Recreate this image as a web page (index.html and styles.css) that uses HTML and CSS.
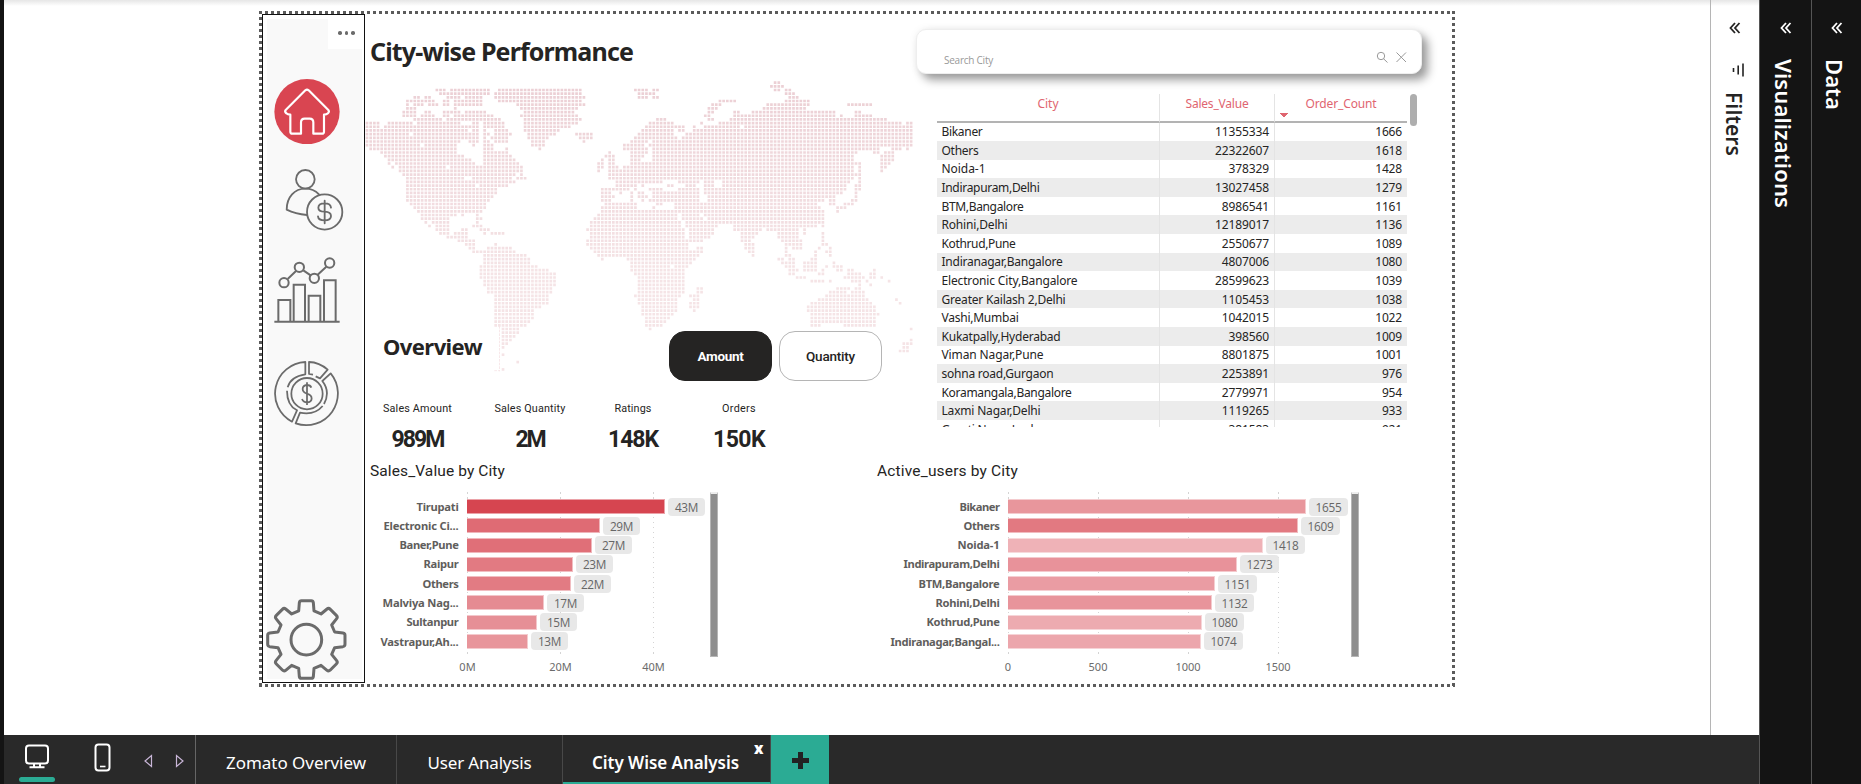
FILE: index.html
```html
<!DOCTYPE html>
<html lang="en">
<head>
<meta charset="utf-8">
<title>City Wise Analysis</title>
<link rel="stylesheet" href="styles.css">
</head>
<body>
<div class="app">
  <div class="workspace">
    <div class="stage">
    <main class="canvas">
      <div class="report">
        <nav class="sidebar">
          <div class="more"><i></i><i></i><i></i></div>
          <svg class="ico home" viewBox="72 236 198 196"><circle cx="171" cy="334" r="98" fill="#d94551"/><path d="M166 270Q171 266 176 270L235 329Q239 334 234 339Q230 343 222 343V394Q222 400 216 400H190V366Q190 355 179 355H164Q153 355 153 366V400H127Q121 400 121 394V343Q113 343 109 339Q103 334 107 329Z" fill="none" stroke="#fff" stroke-width="6.5" stroke-linejoin="round"/></svg>
          <svg class="ico user" viewBox="105 505 176 190"><g fill="none" stroke="#6b6b6b" stroke-width="5.500" stroke-linecap="round" stroke-linejoin="round"><circle cx="166" cy="539" r="28"/><path d="M171 646Q136 643 110 630C110 592 134 567 166 567Q190 567 207 584"/><circle cx="224" cy="637" r="53"/><path d="M224 603V671M243 624Q242 611 224 611Q205 611 205 624Q205 636 224 636Q243 637 243 649Q243 662 224 662Q205 662 204 650"/></g></svg>
          <svg class="ico trend" viewBox="72 770 198 202"><g fill="none" stroke="#6b6b6b" stroke-width="6"><path d="M73 964.500H269M85 964V899H121V964M131 964V853H165V964M176 964V886H211V964M222 964V840H257V964M113 836L138 812M160 810L182 825M203 823L229 799"/><circle cx="102" cy="847" r="14"/><circle cx="148" cy="801" r="14"/><circle cx="193" cy="834" r="14"/><circle cx="239" cy="788" r="14"/></g></svg>
          <svg class="ico donut" viewBox="72 32 198 198"><g fill="none" stroke="#6b6b6b" stroke-width="5.300" stroke-linejoin="round"><circle cx="171" cy="130" r="47"/><path d="M113 111Q122 78 166 72V35A95 95 0 0 0 126 214L141 180Q111 165 111 121"/><path d="M189 73L177 71V35Q208 36 233 58L210 84L197 78"/><path d="M222 161Q242 124 217 92L242 69A95 95 0 0 1 137 219L150 187Q193 196 218 167"/><path d="M171 96V164M184 112Q181 104 171 104Q158 105 158 116Q158 126 171 130Q185 134 185 145Q184 156 171 156Q160 156 156 146"/></g></svg>
          <svg class="ico gear" viewBox="50 746 242 244"><g fill="none" stroke="#6b6b6b" stroke-width="9" stroke-linejoin="round"><circle cx="171" cy="868" r="46"/><path d="M156 751H186Q191 751 192 757L194 782L215 791L233 776Q238 772 243 777L261 795Q266 800 262 805L247 824L256 845L281 848Q287 849 287 855V882Q287 888 281 889L256 892L247 912L262 931Q266 936 261 941L243 959Q238 964 233 960L215 945L194 954L192 979Q191 984 186 984H156Q151 984 150 979L148 954L127 945L109 960Q104 964 99 959L81 941Q76 936 80 931L95 912L86 892L61 889Q55 888 55 882V855Q55 849 61 848L86 845L95 824L80 805Q76 800 81 795L99 777Q104 772 109 776L127 791L148 782L150 757Q151 751 156 751Z"/></g></svg>
        </nav>
        <section class="content">
          <div class="upper">
            <section class="left">
              <svg class="map" id="map" viewBox="0 0 1668 930"></svg>
              <h1><span class="fit" data-w="263">City-wise Performance</span></h1>
              <div class="overview">
                <h2><span class="fit" data-w="99">Overview</span></h2>
                <div class="switch"><button class="on"><span class="fit" data-w="46">Amount</span></button><button><span class="fit" data-w="49">Quantity</span></button></div>
              </div>
              <div class="kpis">
                <div class="k1"><span class="fit" data-w="69">Sales Amount</span><b><span class="fit" data-w="52">989M</span></b></div>
                <div class="k2"><span class="fit" data-w="71">Sales Quantity</span><b><span class="fit" data-w="29">2M</span></b></div>
                <div class="k3"><span class="fit" data-w="37">Ratings</span><b><span class="fit" data-w="50">148K</span></b></div>
                <div class="k4"><span class="fit" data-w="34">Orders</span><b><span class="fit" data-w="52">150K</span></b></div>
              </div>
            </section>
            <section class="right">
              <div class="search">
                <span class="fit" data-w="49">Search City</span>
                <svg viewBox="0 0 32 14"><g fill="none" stroke="#999" stroke-width="1"><circle cx="5" cy="5" r="3.700"/><path d="M7.600 7.800L11.500 11.500M20.500 1.500L30 11M30 1.500L20.500 11"/></g></svg>
              </div>
              <div class="tablebox">
                <table>
                  <thead><tr><th><span class="fit" data-w="21">City</span></th><th><span class="fit" data-w="63">Sales_Value</span></th><th class="sort"><span class="fit" data-w="71">Order_Count</span></th></tr></thead>
                  <tbody id="rows"></tbody>
                </table>
                <div class="thumb"></div>
              </div>
            </section>
          </div>
          <div class="lower">
            <section class="chart sales"><h3><span class="fit" data-w="135">Sales_Value by City</span></h3><div class="plot" id="sales"></div></section>
            <section class="chart users"><h3><span class="fit" data-w="141">Active_users by City</span></h3><div class="plot" id="users"></div></section>
          </div>
        </section>
      </div>
    </main>
    <aside class="pane filters">
      <svg class="chev" viewBox="0 0 12 14"><path d="M6 2L1.500 7L6 12M10.500 2L6 7L10.500 12"/></svg>
      <svg class="funnel" viewBox="0 0 12 14"><path d="M11 .500V13.500M6.200 2.500V11.500M1.500 5V9" stroke="#222" stroke-width="1.600"/></svg>
      <span class="fitv" data-w="64">Filters</span>
    </aside>
    </div>
    <footer class="tabs">
      <div class="views">
        <div class="desk"><svg width="26" height="26" viewBox="0 0 26 26"><g fill="none" stroke="#fff" stroke-width="2"><rect x="2" y="1.500" width="22" height="18" rx="3"/><path d="M10 20V23M16 20V23M5.500 23.300H20.500"/></g></svg><i></i></div>
        <svg class="phone" width="18" height="30" viewBox="0 0 18 30"><rect x="1.500" y="1.500" width="14" height="26" rx="3" fill="none" stroke="#fff" stroke-width="2"/><path d="M6 23.500H11.500" stroke="#fff" stroke-width="1.600"/></svg>
        <svg class="tri t1" width="9" height="14" viewBox="0 0 9 14"><path d="M7.500 1.500V12.500L1 7Z" fill="none" stroke="#c9b6d8" stroke-width="1.200"/></svg>
        <svg class="tri" width="9" height="14" viewBox="0 0 9 14"><path d="M1.500 1.500V12.500L8 7Z" fill="none" stroke="#c9b6d8" stroke-width="1.200"/></svg>
      </div>
      <div class="tab one"><span class="fit" data-w="140">Zomato Overview</span></div>
      <div class="tab two"><span class="fit" data-w="104">User Analysis</span></div>
      <div class="tab three"><span class="fit" data-w="147">City Wise Analysis</span><b>x</b></div>
      <div class="add"></div>
    </footer>
  </div>
  <aside class="pane dark vis"><svg class="chev" viewBox="0 0 12 14"><path d="M6 2L1.500 7L6 12M10.500 2L6 7L10.500 12"/></svg><span class="fitv" data-w="149">Visualizations</span></aside>
  <aside class="pane dark data"><svg class="chev" viewBox="0 0 12 14"><path d="M6 2L1.500 7L6 12M10.500 2L6 7L10.500 12"/></svg><span class="fitv" data-w="51">Data</span></aside>
</div>
<script src="script.js"></script>
</body>
</html>
```
FILE: styles.css
```css
* { box-sizing: border-box; }
body { margin: 0; width: 1861px; height: 784px; overflow: hidden; background: #141414; font-family: "Noto Sans", "Open Sans", sans-serif; color: #252423; }
h1, h2, h3 { margin: 0; }
.fit, .fitv { display: inline-block; white-space: nowrap; }
.app { display: flex; height: 784px; padding-left: 4px; }
.workspace { width: 1755px; flex: none; display: flex; flex-direction: column; }
.stage { display: flex; height: 735px; }
.canvas { width: 1706px; flex: none; height: 735px; padding: 11px 0 0 255px; background: linear-gradient(#e6e6e6, #fff 6px); }
.report {
  width: 1196px; height: 676px; padding: 3px; display: flex;
  background:
    repeating-linear-gradient(90deg, #5b5b5b 0 3px, transparent 3px 6px) 0 0 / 100% 3px no-repeat,
    repeating-linear-gradient(90deg, #5b5b5b 0 3px, transparent 3px 6px) 0 100% / 100% 3px no-repeat,
    repeating-linear-gradient(#5b5b5b 0 3px, transparent 3px 6px) 0 0 / 3px 100% no-repeat,
    repeating-linear-gradient(#5b5b5b 0 3px, transparent 3px 6px) 100% 0 / 3px 100% no-repeat,
    #fff;
}
.sidebar { width: 103px; height: 669px; flex: none; border: 1px solid #111; display: flex; flex-direction: column; padding: 3px 1px 0 3px; background: linear-gradient(#f9f9f9, #f9f9f9) 4px 4px / 95px 660px no-repeat #fff; }
.more { align-self: flex-end; width: 35px; height: 31px; flex: none; background: #fff; display: flex; gap: 3px; padding: 13px 0 0 10px; }
.more i { width: 3.500px; height: 3.500px; border-radius: 50%; background: #6b6b6b; }
.ico { flex: none; display: block; }
.home { width: 66px; height: 65.300px; margin: 29.700px 0 0 8px; }
.user { width: 58.700px; height: 63.300px; margin: 24.300px 0 0 19px; }
.trend { width: 66px; height: 67.300px; margin: 25px 0 0 8px; }
.donut { width: 66px; height: 66px; margin: 36.700px 0 0 8px; }
.gear { width: 80.700px; height: 81.300px; margin: 172px 0 0 .2px; }
.content { flex: 1; }
.upper { display: flex; height: 441px; }
.left { width: 550px; position: relative; }
.map { position: absolute; left: -5px; top: 56px; width: 556px; height: 310px; }
.left > *:not(.map) { position: relative; }
h1 { padding: 16px 0 0 5px; font-size: 25px; line-height: 42px; height: 317px; }
.overview { display: flex; height: 51px; }
h2 { width: 304px; padding-left: 18px; font-size: 22px; line-height: 31px; }
.switch { display: flex; gap: 7px; }
.switch button { width: 103px; height: 50px; padding: 0; border-radius: 16px; border: 1px solid #b5b5b5; background: #fff; font: 500 13.500px Roboto, sans-serif; color: #252423; }
.switch .on { background: #252423; border-color: #252423; color: #fff; font-weight: 700; }
.kpis { display: flex; margin-top: 19px; font: 10.800px/16px Roboto, sans-serif; }
.kpis div { display: flex; flex-direction: column; align-items: center; }
.kpis b { font-size: 23px; line-height: 30px; margin-top: 8px; }
.k1 { margin-left: 17px; width: 71px; }
.k2 { margin-left: 41px; width: 72px; }
.k3 { margin-left: 47px; width: 40px; }
.k3 b, .k4 b { width: 52px; text-align: center; }
.k4 { margin-left: 66px; width: 40px; }
.right { flex: 1; }
.search { width: 506px; height: 45px; margin: 15px 0 0 1px; border: 1px solid #eee; border-radius: 10px; background: #fff; box-shadow: 6px 6px 10px rgba(0,0,0,.38), 0 0 8px rgba(0,0,0,.06); display: flex; justify-content: space-between; align-items: flex-start; padding: 21px 13px 0 27px; font: 10px/18px "Open Sans", sans-serif; color: #999; }
.search svg { width: 32px; height: 14px; }
.tablebox { display: flex; width: 482px; height: 333px; margin: 20px 0 0 22px; overflow: hidden; }
table { width: 470px; flex: none; border-collapse: separate; border-spacing: 0; table-layout: fixed; font-size: 12px; height: max-content; }
th { height: 28.500px; padding: 1px 0 0; font-weight: 400; color: #df6570; border-bottom: 2px solid #b3b3b3; line-height: 17px; vertical-align: top; }
th:nth-child(1) { width: 222px; } th:nth-child(2) { width: 115px; }
th + th, td + td { border-left: 1px solid #e4e4e4; }
.sort { background: conic-gradient(from -45deg at 50% 100%, #df6570 90deg, transparent 0) 5px 19px / 8px 4px no-repeat; }
td { height: 18.600px; padding: 1px 5px 0 4.500px; line-height: 16px; white-space: nowrap; }
td + td { text-align: right; }
tbody tr:nth-child(even) { background: #ececec; }
.thumb { width: 7px; height: 32px; margin-left: 3px; border-radius: 4px; background: #aeaeae; }
.lower { display: flex; height: 229px; }
.chart { width: 507px; padding-left: 5px; }
.chart.users { flex: 1; }
h3 { font: 400 15.500px/20px Roboto, sans-serif; height: 37px; padding-top: 6px; }
.plot { display: grid; grid-template-columns: 88.500px 1fr 8px; width: 348px; height: 185px; grid-template-rows: 165px 20px; }
.users .plot { grid-template-columns: 122.500px 1fr 8px; width: 482px; }
.names { padding-top: 4.600px; text-align: right; font: 700 11.200px/19.290px "Noto Sans", sans-serif; color: #5f5e5c; }
.names div { height: 19.290px; }
.area { margin-left: 8.500px; padding-top: 7px; position: relative; }
.area i { position: absolute; top: 0; bottom: 0; width: 1px; background: repeating-linear-gradient(#d4d4d4 0 1.500px, transparent 1.500px 5px); }
.row { height: 19.290px; display: flex; position: relative; }
.bar { height: 15px; border: 1px solid rgba(255,255,255,.5); border-left: 0; flex: none; }
.tag { width: 37px; height: 18px; margin: -1.500px 0 0 3px; border-radius: 4px; background: rgba(231,231,231,.95); color: #666; text-align: center; font: 11.800px/18px "Open Sans", sans-serif; letter-spacing: -.3px; }
.users .tag { width: 39px; }
.row:first-child .tag { margin-left: 1px; }
.users .row:first-child .tag { margin-left: -1px; width: 38px; }
.users .row:first-child .bar { border-right: 0; }
.scroll { background: #8e8e8e; border: 1px solid #b5b5b5; border-top: 2px solid #eee; }
.axis { grid-column: 1 / 4; position: relative; height: 20px; font: 11px/20px "Noto Sans", sans-serif; color: #6b6b6b; }
.axis span { position: absolute; transform: translateX(-50%); }
.tabs { height: 49px; background: #292929; display: flex; color: #fff; font-size: 17px; }
.views { width: 192px; border-right: 1px solid #666; display: flex; align-items: flex-start; }
.desk { width: 36px; margin: 9px 0 0 15px; text-align: center; line-height: 0; }
.desk i { display: block; height: 5px; border-radius: 3px; background: #2bab94; margin-top: 7px; }
.phone { margin: 8px 0 0 39px; }
.tri { margin: 19px 0 0 22px; }
.t1 { margin-left: 32px; }
.tab { border-right: 1px solid #484848; line-height: 56px; text-align: center; }
.one { width: 201px; } .two { width: 166px; }
.three { width: 208px; display: flex; padding-left: 29px; font-weight: 600; border-bottom: 2px solid #2bab94; }
.three b { font-size: 15px; line-height: 27px; margin-left: 15px; }
.add { width: 58px; background: linear-gradient(#222, #222) 21px 23px / 17px 5px no-repeat, linear-gradient(#222, #222) 27px 17px / 5px 17px no-repeat, #2bab94; }
.pane { display: flex; flex-direction: column; align-items: center; font-size: 21px; font-weight: 600; border-left: 1px solid #b5b5b5; }
.pane span { writing-mode: vertical-rl; line-height: 26px; }
.filters { width: 49px; background: linear-gradient(#e6e6e6, #fff 6px); }
.dark { width: 52px; background: #141414; color: #fff; border-color: #555; font-size: 22px; }
.data { width: 50px; }
.chev { width: 12px; height: 14px; margin-top: 21px; fill: none; stroke: currentColor; stroke-width: 1.800; }
.funnel { width: 12px; height: 14px; margin: 28px 0 0 6px; fill: none; }
.filters span { margin: 15px 2px 0 0; }
.dark span { margin: 24px 4px 0 0; }
.data span { margin-right: 3px; }
```
FILE: script.js
```js
// Dot runs of the world map, one entry per grid row, as start-end pairs.
const mapRows = `1241-1260
1230-1270
225-262 269-388 412-664 821-862 876-896 1241-1265 1274-1294
236-266 269-388 401-664 832-885 1274-1302
158-178 190-212 258-300 312-366 401-675 832-862 876-896 1285-1315
136-220 247-266 280-366 412-664 1076-1128 1274-1348
136-145 158-190 202-234 247-266 280-366 468-675 1054-1084 1219-1348 1461-1537
136-168 280-289 480-653 1043-1072 1208-1337
125-168 190-212 247-266 270-300 312-377 490-642 1043-1062 1120-1140 1175-1425 1483-1503
125-168 180-222 247-266 280-400 480-653 1032-1050 1120-1425 1440-1448 1483-1537
158-244 258-300 302-420 490-664 887-918 1043-1060 1109-1580
17-56 80-155 170-300 335-355 368-432 490-653 864-940 1020-1028 1076-1625 1638-1658
17-56 70-355 368-432 490-630 853-972 998-1007 1032-1140 1152-1658
17-322 335-355 368-377 401-443 490-598 843-945 950-972 998-1658
17-145 158-355 368-388 401-454 500-587 643-697 832-945 975-1658
17-355 368-377 390-443 500-565 654-697 821-955 965-1658
17-300 322-355 368-388 401-443 512-554 665-675 810-862 876-1658
17-178 190-289 335-344 368-400 512-554 788-852 865-1658
25-289 368-400 434-443 532-543 788-862 876-1560 1590-1625 1638-1648
60-289 368-443 743-752 810-862 876-1490 1540-1558 1572-1602
70-310 368-454 732-765 810-852 876-1480 1560-1602
80-333 368-465 720-730 743-765 810-840 876-1480 1560-1602
80-90 103-344 368-476 710-730 743-765 810-1480 1483-1503 1560-1590
92-100 114-255 269-355 357-487 710-730 743-775 788-1480 1494-1503 1560-1580
114-465 468-487 710-720 743-1480 1494-1503 1560-1569
125-443 446-465 478-487 743-1480 1483-1503
136-310 335-454 465-498 743-1480 1494-1503
136-465 765-905 950-1020 1030-1065 1085-1470 1494-1503
136-345 357-443 765-830 843-850 917-940 972-1010 1032-1065 1087-1458 1483-1503
136-410 720-810 821-830 865-905 950-1018 1032-1460 1483-1503
136-410 720-760 776-785 810-820 832-852 876-1018 1032-1447 1483-1492
136-400 720-765 810-820 832-862 876-1020 1043-1400 1405-1425 1483-1492
136-388 720-752 810-820 843-852 865-1020 1043-1380 1385-1393 1407-1425 1472-1492
147-377 732-830 887-907 940-1370 1407-1425 1450-1480
158-377 720-830 876-885 943-1382 1428-1458
169-366 720-950 954-1392 1428-1437
180-289 302-311 345-355 710-950 960-1020 1030-1392
180-266 345-366 700-950 965-1025 1043-1392
192-200 214-266 345-355 688-960 972-1380 1383-1393
203-210 225-266 335-366 688-965 980-1072 1120-1370 1383-1393
225-266 302-322 357-388 677-970 985-1060 1120-1210 1220-1320 1328-1337
236-266 280-322 368-377 390-432 688-980 990-1060 1142-1200 1250-1315 1328-1337 1383-1393
258-322 688-975 987-1050 1142-1190 1252-1315 1383-1393
291-344 677-985 987-1025 1142-1175 1263-1327 1383-1393
312-344 401-410 677-990 1152-1180 1274-1327 1383-1403
322-344 379-454 688-987 1010-1028 1152-1180 1274-1283 1296-1325 1372-1381 1405-1414
335-366 368-465 700-1028 1162-1182 1274-1283 1363-1370 1395-1414
368-498 710-1017 1174-1183 1274-1295 1363-1370 1407-1414
368-509 720-730 800-1007 1252-1270 1285-1305 1352-1370
368-509 810-995 1263-1305 1330-1370 1417-1425
357-531 810-930 940-985 1274-1305 1330-1370 1395-1403 1417-1448
357-565 810-972 1285-1315 1330-1370 1385-1393 1428-1448 1461-1480 1538-1548
357-587 821-972 1285-1305 1372-1393 1461-1503 1527-1548
357-587 832-972 1307-1337 1450-1515 1527-1548 1560-1570
368-587 832-972 1352-1393 1407-1414 1472-1503 1515-1525 1583-1590
368-587 832-972 1494-1503 1527-1537
379-576 832-972 1009-1028 1428-1470 1483-1503
379-576 832-972 1009-1028 1407-1458 1472-1515
401-565 821-962 987-1018 1395-1515
401-565 832-950 998-1018 1372-1525 1605-1613
401-565 832-950 987-1018 1352-1537 1616-1625
401-543 843-950 987-1018 1340-1548
401-520 843-950 998-1007 1340-1548
401-520 843-940 1352-1558
401-520 853-930 1352-1548
401-509 853-918 1352-1548
401-498 853-907 1352-1385 1450-1548
423-476 864-873 1650-1658
423-476
423-465
423-454 1650-1658
423-443 1628-1658
423-432 1628-1646
1616-1646
423-432

468-476

423-432`.split("\n");

const step = 11.03;
let dots = '<path d="M418.500 768V904M403 902H418" stroke="#f6e3e6" stroke-width="2.500" stroke-dasharray="8 3" fill="none"/>';
mapRows.forEach((line, i) => {
  const row = i - 2, y = 60 + row * step;
  let d = "";
  line.split(" ").filter(Boolean).forEach(run => {
    const [a, b] = run.split("-").map(Number);
    for (let c = 0; c < 149; c++) {
      const x = 21 + c * step;
      if (x > a && x < b) d += `M${(x - 4).toFixed(1)} ${(y - 4).toFixed(1)}h8v8h-8z`;
    }
  });
  const t = Math.max(0, Math.min(1, row / 50));
  const mix = (p, q) => Math.round(p + (q - p) * t);
  dots += `<path d="${d}" fill="rgb(${mix(236, 245)},${mix(208, 228)},${mix(213, 230)})"/>`;
});
document.getElementById("map").innerHTML = dots;

const cities = [["Bikaner", 11355334, 1666], ["Others", 22322607, 1618], ["Noida-1", 378329, 1428], ["Indirapuram,Delhi", 13027458, 1279], ["BTM,Bangalore", 8986541, 1161], ["Rohini,Delhi", 12189017, 1136], ["Kothrud,Pune", 2550677, 1089], ["Indiranagar,Bangalore", 4807006, 1080], ["Electronic City,Bangalore", 28599623, 1039], ["Greater Kailash 2,Delhi", 1105453, 1038], ["Vashi,Mumbai", 1042015, 1022], ["Kukatpally,Hyderabad", 398560, 1009], ["Viman Nagar,Pune", 8801875, 1001], ["sohna road,Gurgaon", 2253891, 976], ["Koramangala,Bangalore", 2779971, 954], ["Laxmi Nagar,Delhi", 1119265, 933], ["Gomti Nagar,Lucknow", 381583, 921]];
const cityWidths = [41, 37, 44, 98, 82, 66, 74, 121, 136, 124, 77, 119, 102, 112, 130, 99, 118];
document.getElementById("rows").innerHTML = cities.map(([n, s, o], i) =>
  `<tr><td><span class="fit" data-w="${cityWidths[i]}">${n}</span></td><td><span class="fit" data-w="${String(s).length * 6.75}">${s}</span></td><td><span class="fit" data-w="${String(o).length * 6.7}">${o}</span></td></tr>`).join("");

function chart(id, x0, items, ticks) {
  const names = items.map(r => `<div><span class="fit" data-w="${r[4]}">${r[0]}</span></div>`).join("");
  const lines = ticks.map(t => `<i style="left:${t[1]}px"></i>`).join("");
  const rows = items.map(r => `<div class="row"><div class="bar" style="width:${r[1]}px;background-color:${r[3]}"></div><div class="tag">${r[2]}</div></div>`).join("");
  const axis = ticks.map(t => `<span style="left:${t[1] + x0}px">${t[0]}</span>`).join("");
  document.getElementById(id).innerHTML = `<div class="names">${names}</div><div class="area">${lines}${rows}</div><div class="scroll"></div><div class="axis">${axis}</div>`;
}
chart("sales", 97.5, [["Tirupati", 198, "43M", "#d64550", 42], ["Electronic Ci...", 133, "29M", "#df6b74", 75], ["Baner,Pune", 125, "27M", "#e06f78", 59], ["Raipur", 106, "23M", "#e27a82", 35], ["Others", 104, "22M", "#e27b83", 36], ["Malviya Nag...", 77, "17M", "#e58b92", 76], ["Sultanpur", 70, "15M", "#e68f96", 52], ["Vastrapur,Ah...", 61, "13M", "#e8959b", 78]],
  [["0M", 0], ["20M", 93], ["40M", 186]]);
chart("users", 131, [["Bikaner", 298, 1655, "#e8969c", 40], ["Others", 290, 1609, "#e27981", 36], ["Noida-1", 255, 1418, "#efb2b7", 42], ["Indirapuram,Delhi", 229, 1273, "#e8929a", 96], ["BTM,Bangalore", 207, 1151, "#ea9ca3", 81], ["Rohini,Delhi", 204, 1132, "#e8949b", 64], ["Kothrud,Pune", 194, 1080, "#edabb0", 73], ["Indiranagar,Bangal...", 193, 1074, "#eca6ac", 109]],
  [["0", 0], ["500", 90], ["1000", 180], ["1500", 270]]);

// Track labels to their design widths.
document.querySelectorAll(".fit, .fitv").forEach(el => {
  const size = el.classList.contains("fitv") ? el.getBoundingClientRect().height : el.getBoundingClientRect().width;
  const gap = (Number(el.dataset.w) - size) / el.textContent.length;
  el.style.letterSpacing = gap.toFixed(3) + "px";
});
```
